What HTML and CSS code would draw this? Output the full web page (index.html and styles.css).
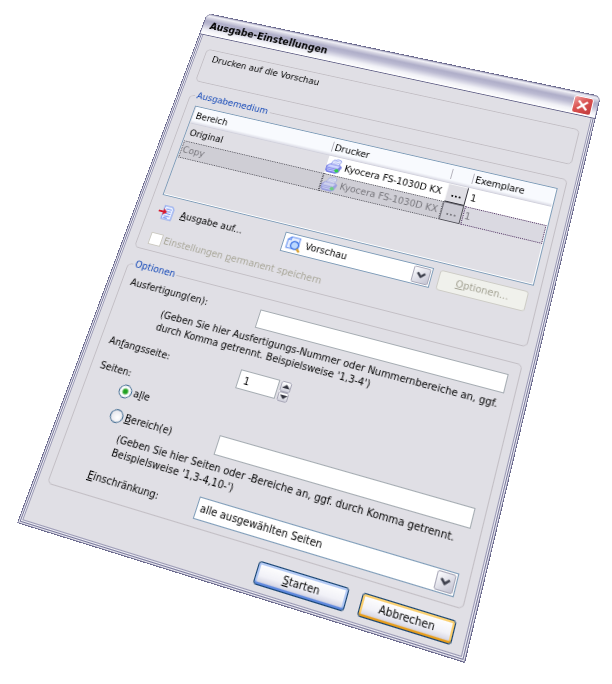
FILE: index.html
```html
<!DOCTYPE html>
<html lang="de">
<head>
    <meta charset="UTF-8">
    <meta name="viewport" content="width=device-width, initial-scale=1.0">
    <title>Ausgabe-Einstellungen</title>
    <link rel="stylesheet" href="styles.css">
</head>
<body>
    <svg class="defs" width="0" height="0" aria-hidden="true">
        <symbol id="printer" viewBox="0 0 16 16">
            <path d="M4 7 6 2 12 0 14 2 12 8z" fill="#eef1ff" stroke="#8d9cec" stroke-width=".8"/>
            <path d="M7 3l5-1M6 5l6-1" stroke="#a9b6f4" stroke-width=".8"/>
            <path d="M0 9 3 6h11l2 2-2 6-3 2H2l-2-2z" fill="#7d84e6"/>
            <path d="M3 7h11l-2 3H1z" fill="#cfd6ff"/>
            <path d="M1 11.500h10M2 13.500h9" stroke="#c3caff" stroke-width="1"/>
            <circle cx="11.500" cy="12.500" r="2" fill="#2fd04a"/>
        </symbol>
        <symbol id="arrow" viewBox="0 0 10 8">
            <path d="M1 1.500 5 5.500 9 1.500" fill="none" stroke="#3c3f4c" stroke-width="2.400"/>
        </symbol>
    </svg>

    <form class="dialog">
        <header class="titlebar">
            <h1>Ausgabe-Einstellungen</h1>
            <button type="button" class="close" aria-label="Schließen">
                <svg viewBox="0 0 14 14"><path d="M3 3l8 8M11 3l-8 8" stroke="#fff" stroke-width="2"/></svg>
            </button>
        </header>

        <div class="content">
            <p class="message">Drucken auf die Vorschau</p>

            <fieldset class="medium">
                <legend>Ausgabemedium</legend>
                <div class="list">
                    <table>
                        <colgroup>
                            <col class="col-range">
                            <col class="col-printer">
                            <col class="col-more">
                            <col>
                        </colgroup>
                        <thead>
                            <tr><th>Bereich</th><th>Drucker</th><th></th><th>Exemplare</th></tr>
                        </thead>
                        <tbody>
                            <tr>
                                <td>Original</td>
                                <td class="white"><span class="printer"><svg><use href="#printer"/></svg>Kyocera FS-1030D KX</span></td>
                                <td class="white"><button type="button" class="more">...</button></td>
                                <td class="white">1</td>
                            </tr>
                            <tr class="inactive">
                                <td><span class="dots">Copy</span></td>
                                <td><span class="dots printer"><svg><use href="#printer"/></svg>Kyocera FS-1030D KX</span></td>
                                <td><button type="button" class="more">...</button></td>
                                <td><span class="dots">1</span></td>
                            </tr>
                        </tbody>
                    </table>
                </div>

                <div class="output">
                    <label for="target">
                        <svg class="icon" viewBox="0 0 16 16">
                            <path d="M5 1h8l2 2v12H5z" fill="#eef3ff" stroke="#7c9cf0"/>
                            <path d="M7 4h6M7 6.500h6M7 9h6M7 11.500h6M7 13.500h4" stroke="#6f8ff0"/>
                            <path d="M0 6.500h5V4l4 3.500-4 3.500V8.500H0z" fill="#d8182c"/>
                        </svg>
                        <span><u>A</u>usgabe auf...</span>
                    </label>
                    <div class="combo">
                        <svg class="icon" viewBox="0 0 16 16">
                            <path d="M1 4 4 1h9v12H1z" fill="#e6eeff" stroke="#5f8cf0"/>
                            <path d="M1 4h3V1" fill="none" stroke="#5f8cf0"/>
                            <circle cx="9" cy="9" r="4" fill="#bcd8ff" stroke="#3f74e4" stroke-width="1.400"/>
                            <path d="M12 12l3 3" stroke="#d9a53a" stroke-width="2.400"/>
                        </svg>
                        <select id="target"><option>Vorschau</option></select>
                        <span class="drop"><svg><use href="#arrow"/></svg></span>
                    </div>
                    <button type="button" class="btn" disabled><u>O</u>ptionen...</button>
                </div>

                <label class="check disabled">
                    <input type="checkbox" disabled>
                    <span>Einstellungen <u>p</u>ermanent speichern</span>
                </label>
            </fieldset>

            <fieldset class="options">
                <legend>Optionen</legend>
                <div class="row">
                    <label for="copies">Ausfertigung(en):</label>
                    <input type="text" id="copies">
                </div>
                <p class="hint">(Geben Sie hier Ausfertigungs-Nummer oder Nummernbereiche an, ggf. durch Komma getrennt. Beispielsweise '1,3-4')</p>
                <div class="row start">
                    <label for="first">An<u>f</u>angsseite:</label>
                    <div class="spinner">
                        <input type="text" id="first" value="1">
                        <div class="spin">
                            <button type="button" aria-label="Mehr"><svg viewBox="0 0 8 6"><path d="M0 5 4 1l4 4z" fill="#33343f"/></svg></button>
                            <button type="button" aria-label="Weniger"><svg viewBox="0 0 8 6"><path d="M0 1l4 4 4-4z" fill="#33343f"/></svg></button>
                        </div>
                    </div>
                </div>
                <p class="pages">Seiten:</p>
                <label class="radio"><input type="radio" name="pages" checked><span>a<u>l</u>le</span></label>
                <div class="row range">
                    <label class="radio"><input type="radio" name="pages"><span><u>B</u>ereich(e)</span></label>
                    <input type="text" aria-label="Bereich(e)">
                </div>
                <p class="hint">(Geben Sie hier Seiten oder -Bereiche an, ggf. durch Komma getrennt. Beispielsweise '1,3-4,10-')</p>
                <div class="row limit">
                    <label for="limit"><u>E</u>inschränkung:</label>
                    <div class="combo">
                        <select id="limit"><option>alle ausgewählten Seiten</option></select>
                        <span class="drop"><svg><use href="#arrow"/></svg></span>
                    </div>
                </div>
            </fieldset>

            <div class="actions">
                <button type="submit" class="btn default"><u>S</u>tarten</button>
                <button type="button" class="btn hot">Abbrechen</button>
            </div>
        </div>
    </form>
</body>
</html>
```
FILE: styles.css
```css
* {
    box-sizing: border-box;
}

body {
    margin: 0;
    min-height: 100vh;
    background: #fff;
    font-family: "DejaVu Sans Condensed", "DejaVu Sans", Tahoma, sans-serif;
    font-size: 11px;
    line-height: 14px;
    color: #000;
}

.defs {
    display: block;
}

input, select, button {
    font: inherit;
    color: inherit;
    margin: 0;
    padding: 0;
}

p, h1 {
    margin: 0;
}

/* the whole window is tilted in perspective */
.dialog {
    max-width: 452px;
    background: #e0dfe5;
    border: 1px solid #66658a;
    border-radius: 7px 7px 0 0;
    box-shadow: inset 0 0 0 1px #f1f1f7, inset 0 0 0 2px #77769a, inset 0 0 0 3px #f1f1f7, inset 0 0 0 4px #9a99b4;
    transform-origin: 0 0;
    transform: matrix3d(0.784159, 0.169646, 0, -0.00014564, -0.326085, 0.739847, 0, -0.00023817, 0, 0, 1, 0, 207, 13, 0, 1);
}

.titlebar {
    display: flex;
    justify-content: space-between;
    align-items: center;
    height: 27px;
    padding: 2px 5px 0 8px;
    border-bottom: 1px solid #66658a;
    border-radius: 6px 6px 0 0;
    background: linear-gradient(#a5a4bd, #f4f4f9 8%, #d5d4e2 18%, #aeadc8 34%, #bcbbd2 50%, #f0f0f6 78%, #fff);
}

.titlebar h1 {
    font-size: 12px;
    line-height: 16px;
}

.close {
    width: 21px;
    height: 21px;
    border: 1px solid #fff;
    border-radius: 3px;
    background: linear-gradient(135deg, #f0a0a0, #d9504f 45%, #c23c3c);
}

.close svg {
    display: block;
    width: 17px;
    height: 17px;
    margin: auto;
}

.content {
    padding: 16px 12px 10px 14px;
}

.message {
    height: 42px;
    padding: 4px 9px;
    border: 1px solid #c3bfc5;
    border-radius: 5px;
}

fieldset {
    min-width: 0;
    margin: 10px 0 0;
    border: 1px solid #c3bfc5;
    border-radius: 5px;
}

legend {
    margin-left: -4px;
    padding: 0 2px;
    color: #1549b8;
}

.medium {
    padding: 5px 7px 6px 9px;
}

.list {
    min-height: 110px;
    padding: 0 1px;
    border: 1px solid #7f9db9;
    box-shadow: inset -1px -1px #fff;
}

table {
    width: 100%;
    table-layout: fixed;
    border-collapse: collapse;
}

.col-range {
    width: 161px;
}

.col-printer {
    width: 132px;
}

.col-more {
    width: 23px;
}

th, td {
    height: 21px;
    padding: 0 0 0 3px;
    text-align: left;
    font-weight: normal;
    white-space: nowrap;
}

th {
    position: relative;
    background: linear-gradient(#f8fafe 80%, #dcdce6 96%, #c4c4d0);
}

th + th::before {
    content: "";
    position: absolute;
    left: 0;
    top: 4px;
    height: 12px;
    border-left: 1px solid #b4b2bc;
}

td + td {
    padding: 0;
}

.white {
    background: #fff;
}

td:last-child {
    padding-left: 3px;
}

.printer {
    display: flex;
    align-items: center;
    gap: 3px;
}

.printer svg {
    flex: none;
    width: 17px;
    height: 17px;
}

.inactive td {
    padding: 0;
    background: #cfced5;
    color: #77767c;
}

.inactive td:last-child {
    background: #dad9e1;
}

.dots {
    display: block;
    height: 21px;
    padding: 0 1px;
    border: 1px dotted #55545c;
    line-height: 19px;
}

.dots.printer {
    display: flex;
    padding: 0;
}

.inactive td:last-child .dots {
    border-color: #4a2a5c;
}

.dots svg {
    opacity: .6;
}

.more {
    display: block;
    width: 22px;
    height: 21px;
    border: 1px solid;
    border-color: #f4f4f6 #33323a #33323a #f4f4f6;
    background: #dfdee4;
    font-weight: bold;
}

.inactive .more {
    background: #cbcad3;
    border-color: #77767f #55545c #55545c #77767f;
}

.output {
    display: grid;
    grid-template-columns: 143px 161px 1fr;
    align-items: center;
    padding-right: 3px;
    margin-top: 7px;
}

.output .btn {
    margin-left: 7px;
}

.output label {
    display: flex;
    align-items: center;
    gap: 8px;
    padding-left: 2px;
}

.icon {
    flex: none;
    width: 17px;
    height: 17px;
}

.combo {
    display: flex;
    align-items: center;
    height: 22px;
    padding: 1px;
    border: 1px solid #7f9db9;
    background: #fff;
}

.combo .icon {
    margin: 0 2px;
}

.combo select {
    flex: 1;
    min-width: 0;
    padding: 0 2px;
    border: 0;
    background: none;
    appearance: none;
}

.drop {
    display: flex;
    align-items: center;
    justify-content: center;
    width: 18px;
    height: 18px;
    border: 1px solid #a9a8b8;
    border-radius: 2px;
    background: linear-gradient(135deg, #fdfdff, #c4c4d3);
}

.drop svg {
    width: 10px;
    height: 8px;
}

.btn {
    height: 22px;
    border: 1px solid #12406f;
    border-radius: 3px;
    background: linear-gradient(#fff, #f1f1f7 60%, #cdcddd);
}

.btn:disabled {
    border-color: #cdccc6;
    background: #f0f1ec;
    color: #a3a293;
}

.check, .radio {
    display: flex;
    align-items: center;
    gap: 2px;
}

.check {
    margin-top: 14px;
    padding-left: 3px;
}

.check.disabled {
    color: #a8a698;
}

.check input {
    appearance: none;
    width: 14px;
    height: 14px;
    border: 1px solid #cccac2;
    background: #fff;
}

.options {
    margin-top: 11px;
    padding: 6px 10px 7px 9px;
}

.row {
    display: grid;
    grid-template-columns: 143px 1fr;
    align-items: start;
}

input[type="text"] {
    width: 100%;
    height: 20px;
    padding: 0 5px;
    border: 1px solid #a5acb2;
    background: #fff;
}

.hint {
    margin: 5px 0 0 43px;
}

.start {
    margin-top: 12px;
}

.spinner {
    display: flex;
    gap: 2px;
}

.spinner input[type="text"] {
    width: 42px;
}

.spin {
    display: grid;
    width: 11px;
    height: 21px;
    background: #f4f4f8;
}

.spin button {
    display: flex;
    align-items: center;
    justify-content: center;
    border: 1px solid #a9a8b8;
    border-radius: 2px;
    background: linear-gradient(#fff, #cfcfdb);
}

.spin svg {
    width: 8px;
    height: 6px;
}

.pages {
    margin-top: 6px;
}

.radio {
    padding-left: 28px;
}

.options > .radio {
    margin-top: 5px;
}

.radio input {
    appearance: none;
    width: 14px;
    height: 14px;
    border: 1px solid #2c5c86;
    border-radius: 50%;
    background: radial-gradient(circle at 60% 60%, #fff, #dcdce4);
}

.radio input:checked {
    background: radial-gradient(circle, #21a121 0 2px, #fff 4px);
}

.range {
    align-items: center;
    margin-top: 9px;
}

.limit {
    align-items: center;
    margin-top: 9px;
}

.limit label {
    padding-left: 27px;
}

.actions {
    display: flex;
    justify-content: flex-end;
    gap: 13px;
    padding-right: 3px;
    margin-top: 11px;
}

.actions .btn {
    width: 90px;
}

.default {
    box-shadow: inset 0 -2px 1px #5b86dc, inset 0 0 0 2px #b5cbf5;
}

.hot {
    box-shadow: inset 0 -2px 1px #e59b1b, inset 0 0 0 2px #fbd173;
}
```
